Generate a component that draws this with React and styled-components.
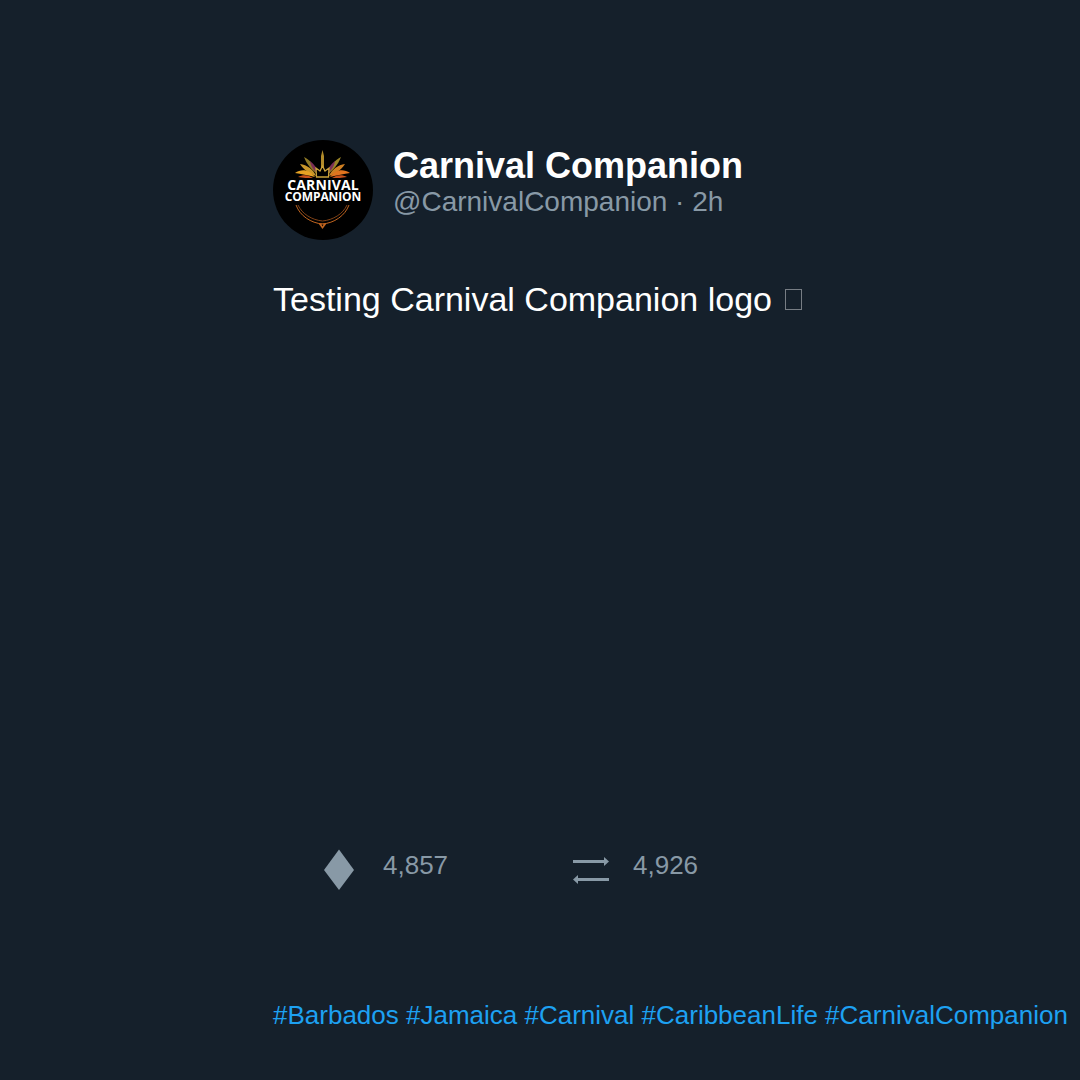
import React from "react";
import styled, { createGlobalStyle } from "styled-components";

const Global = createGlobalStyle`
  html, body { margin: 0; padding: 0; background: #15202b; }
`;

const Page = styled.div`
  width: 1080px;
  height: 1080px;
  background: #15202b;
  font-family: "Liberation Sans", Arial, sans-serif;
  display: flex;
  flex-direction: column;
  padding: 140px 0 0 273px;
  box-sizing: border-box;
  overflow: hidden;
`;

const Header = styled.header`
  display: flex;
  align-items: flex-start;
  gap: 20px;
`;

const Avatar = styled.div`
  width: 100px;
  height: 100px;
  border-radius: 50%;
  background: #000;
  overflow: hidden;
  position: relative;
  flex: none;
`;

const LogoWrap = styled.div`
  position: absolute;
  inset: 0;
  line-height: 0;
`;

const LogoText = styled.div`
  position: absolute;
  left: 0;
  right: 0;
  top: 38px;
  text-align: center;
  color: #fff;
  font-family: "Open Sans", sans-serif;
  font-weight: 700;
`;

const LogoLine = styled.div`
  font-size: ${(p) => p.$size}px;
  line-height: ${(p) => p.$line}px;
  letter-spacing: ${(p) => p.$track}px;
`;

const Names = styled.div`
  display: flex;
  flex-direction: column;
  margin-top: 6px;
`;

const Name = styled.div`
  color: #fff;
  font-size: 36px;
  font-weight: 700;
  line-height: 40px;
`;

const Handle = styled.div`
  color: #8899a6;
  font-size: 28px;
  line-height: 32px;
`;

const Body = styled.p`
  color: #fff;
  font-size: 34px;
  line-height: 40px;
  margin: 39px 0 0;
  height: 561px;
`;

const MissingGlyph = styled.span`
  display: inline-block;
  width: 15px;
  height: 19px;
  margin-left: 4px;
  border: 1px solid rgba(255, 255, 255, 0.42);
  vertical-align: 1px;
`;

const Stats = styled.div`
  display: flex;
  padding-left: 50px;
  height: 50px;
  align-items: center;
`;

const Stat = styled.div`
  display: flex;
  align-items: center;
  gap: ${(p) => p.$gap}px;
  width: ${(p) => p.$width}px;
  color: #8899a6;
  font-size: 26px;
`;

const IconBox = styled.div`
  width: ${(p) => p.$width}px;
  padding-top: 10px;
  display: flex;
  justify-content: center;
  flex: none;
`;

const Tags = styled.div`
  color: #1da1f2;
  font-size: 26px;
  line-height: 32px;
  margin-top: 109px;
  white-space: nowrap;
`;

const Leaf = ({ d, fill }) => <path d={d} fill={fill} />;

const Logo = () => (
  <svg width="100" height="100" viewBox="0 0 100 100">
    <Leaf d="M49.500 10 L51 16 L51 30 L48 30 L48 16 Z" fill="#b08a2a" />
    <Leaf d="M31 17 C37 20 42 26 44 34 C39 30 34 25 31 17 Z" fill="#8f7a26" />
    <Leaf d="M68 17 C62 20 57 26 55 34 C60 30 65 25 68 17 Z" fill="#9a8426" />
    <Leaf d="M37 21 C41 24 44 28 45 33 C41 31 38 27 37 21 Z" fill="#7d2f57" />
    <Leaf d="M62 21 C58 24 55 28 54 33 C58 31 61 27 62 21 Z" fill="#7d2f57" />
    <Leaf d="M27 24 C34 25 40 29 43 36 C37 34 31 30 27 24 Z" fill="#c9962a" />
    <Leaf d="M72 24 C65 25 59 29 56 36 C62 34 68 30 72 24 Z" fill="#cf7f22" />
    <Leaf d="M22 33 C29 28 37 30 42 37 C35 35 28 34 22 33 Z" fill="#e6a224" />
    <Leaf d="M77 33 C70 28 62 30 57 37 C64 35 71 34 77 33 Z" fill="#e2741f" />
    <Leaf d="M25 37 C30 34 36 35 40 38 C35 38 30 38 25 37 Z" fill="#c9511b" />
    <Leaf d="M74 37 C69 34 63 35 59 38 C64 38 69 38 74 37 Z" fill="#c9511b" />
    <path d="M43.500 37 L43 28 L47 31 L49.500 26 L52 31 L56 28 L55.500 37 Z" fill="#000" stroke="#c9a13a" strokeWidth="1.3" />
    <g fill="none">
      <path d="M23 65 C27 76 38 83 49.500 84 C61 83 72 76 76 65" stroke="#c2651f" strokeWidth="1" />
      <path d="M25 65 C29 74 39 80 49.500 81 C60 80 70 74 74 65" stroke="#8f4a1a" strokeWidth="0.9" />
    </g>
    <path d="M45.500 83.500 H53.500 L49.500 89 Z" fill="#c2651f" />
    <path d="M48.500 84.500 H50.500 L49.500 86.500 Z" fill="#000" />
  </svg>
);

export default function App() {
  return (
    <Page>
      <Global />
      <Header>
        <Avatar>
          <LogoWrap><Logo /></LogoWrap>
          <LogoText>
            <LogoLine $size={14} $line={13} $track={0.1}>CARNIVAL</LogoLine>
            <LogoLine $size={12} $line={11} $track={-0.1}>COMPANION</LogoLine>
          </LogoText>
        </Avatar>
        <Names>
          <Name>Carnival Companion</Name>
          <Handle>@CarnivalCompanion · 2h</Handle>
        </Names>
      </Header>
      <Body>Testing Carnival Companion logo <MissingGlyph /></Body>
      <Stats>
        <Stat $width={250} $gap={28}>
          <IconBox $width={32}>
            <svg width="32" height="42" viewBox="0 0 32 42"><path d="M16 0.500 L31 21 L16 41 L1 21 Z" fill="#8899a6" /></svg>
          </IconBox>
          <span>4,857</span>
        </Stat>
        <Stat $width={250} $gap={22}>
          <IconBox $width={38}>
            <svg width="38" height="30" viewBox="0 0 38 30">
              <path d="M0 6.500 H32" stroke="#8899a6" strokeWidth="3" />
              <path d="M31 2 L36 6.500 L31 11 Z" fill="#8899a6" />
              <path d="M4 24.500 H36" stroke="#8899a6" strokeWidth="3" />
              <path d="M5 20 L0 24.500 L5 29 Z" fill="#8899a6" />
            </svg>
          </IconBox>
          <span>4,926</span>
        </Stat>
      </Stats>
      <Tags>#Barbados #Jamaica #Carnival #CaribbeanLife #CarnivalCompanion</Tags>
    </Page>
  );
}
